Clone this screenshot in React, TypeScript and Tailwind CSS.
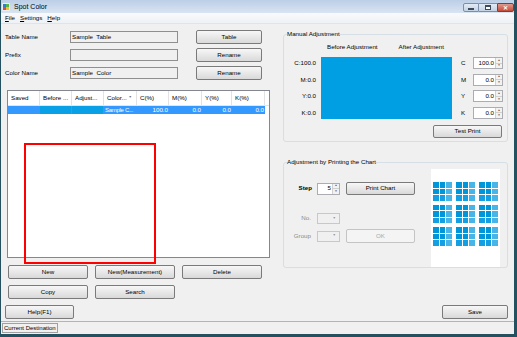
import React from 'react';
import clsx from 'clsx';

const FONT = "font-['Liberation_Sans',Arial,sans-serif]";

function Btn({ children, className, disabled }: { children: React.ReactNode; className?: string; disabled?: boolean }) {
  return (
    <div
      className={clsx(
        'flex items-center justify-center whitespace-nowrap rounded-[2px] border text-[6.2px] leading-none',
        disabled
          ? 'border-[#c4c4c4] bg-[#f4f4f4] text-[#a8a8a8]'
          : 'border-[#7a7a7a] bg-linear-to-b from-[#f7f7f7] to-[#d9d9d9] text-black',
        className
      )}
    >
      {children}
    </div>
  );
}

function Spin({ value, className }: { value: string; className?: string }) {
  return (
    <div className={clsx('flex h-[12px] border border-[#abadb3] bg-white', className)}>
      <div className="flex flex-1 items-center justify-end pr-[1px] text-[6.2px] leading-none">{value}</div>
      <div className="flex w-[7px] flex-col border-l border-[#d0d0d0] bg-[#f2f2f2]">
        <div className="flex flex-1 items-center justify-center border-b border-[#d0d0d0] text-[3px] leading-none text-[#606060]">▲</div>
        <div className="flex flex-1 items-center justify-center text-[3px] leading-none text-[#606060]">▼</div>
      </div>
    </div>
  );
}

function Combo() {
  return (
    <div className="flex h-[11px] w-[23px] items-center justify-end border border-[#c8c8c8] bg-[#f0f0f0] pr-[3px]">
      <span className="text-[3.5px] leading-none text-[#9a9a9a]">▼</span>
    </div>
  );
}

function TopRow({ label, value, button, first }: { label: string; value: string; button: string; first?: boolean }) {
  return (
    <div className={clsx('flex h-[14px] items-center', !first && 'mt-[4px]')}>
      <div className="w-[65px] text-[6.2px] leading-none">{label}</div>
      <div className="flex h-[12px] w-[108px] items-center whitespace-pre border border-[#8f8f8f] bg-[#f0f0f0] pl-[1px] text-[6.2px] leading-none">
        {value}
      </div>
      <Btn className="ml-[18px] h-[14px] w-[66px]">{button}</Btn>
    </div>
  );
}

const columns = [
  { name: 'Saved', w: 'w-[32px]' },
  { name: 'Before ...', w: 'w-[32px]' },
  { name: 'Adjust...', w: 'w-[32px]' },
  { name: 'Color...', w: 'w-[33px]' },
  { name: 'C(%)', w: 'w-[32px]' },
  { name: 'M(%)', w: 'w-[33px]' },
  { name: 'Y(%)', w: 'w-[30px]' },
  { name: 'K(%)', w: 'w-[33px]' },
];

function ChartGroup() {
  const cells = [0, 1, 2, 3, 4, 5, 6, 7, 8];
  return (
    <div className="grid h-[19px] w-[19px] grid-cols-3 grid-rows-3 gap-[1px]">
      {cells.map((i) => (
        <div
          key={i}
          className={clsx(i % 3 === 2 ? 'bg-[#47b5e8]' : i >= 6 ? 'bg-[#139fe2]' : 'bg-[#0096da]')}
        />
      ))}
    </div>
  );
}

export default function App() {
  return (
    <div
      className={clsx(
        FONT,
        'relative flex h-[337px] w-[517px] flex-col overflow-hidden border-r-[3px] border-b-[3px] border-l border-[#24505f] bg-[#f0f0f0] text-black'
      )}
    >
      {/* title bar */}
      <div className="flex h-[13px] items-center bg-linear-to-b from-[#bccfe6] to-[#d9e4f1] pl-[1px]">
        <svg width="8" height="8" viewBox="0 0 8 8">
          <rect x="0" y="0" width="8" height="8" rx="1" fill="#e8eef6" />
          <rect x="1" y="1" width="3" height="3" fill="#2f7fd0" />
          <rect x="4" y="1" width="3" height="3" fill="#58b448" />
          <rect x="1" y="4" width="3" height="3" fill="#e04a3a" />
          <rect x="4" y="4" width="3" height="3" fill="#f2c230" />
        </svg>
        <span className="ml-[4px] text-[7px] leading-none">Spot Color</span>
        <div className="ml-auto mt-[3px] flex h-[9px] self-start">
          <div className="flex w-[16px] items-center justify-center rounded-l-[2px] border border-[#7d8fa6] bg-linear-to-b from-[#e3ebf5] to-[#c3d2e4]">
            <div className="mt-[3px] h-[2px] w-[6px] border border-[#3b4a5c] bg-white" />
          </div>
          <div className="flex w-[18px] items-center justify-center border-y border-[#7d8fa6] bg-linear-to-b from-[#e3ebf5] to-[#c3d2e4]">
            <div className="h-[5px] w-[6px] border border-t-2 border-[#3b4a5c] bg-white" />
          </div>
          <div className="flex w-[17px] items-center justify-center rounded-r-[2px] border border-[#8a3a30] bg-linear-to-b from-[#e09a8c] to-[#c5493a] text-[6px] font-bold leading-none text-white">
            ✕
          </div>
        </div>
      </div>

      {/* menu bar */}
      <div className="flex h-[11px] items-center border-b border-[#e0e3e8] bg-linear-to-b from-[#f9fafc] to-[#eef1f5] pl-[4px] text-[6.2px] leading-none">
        <span><u>F</u>ile</span>
        <span className="ml-[5px]"><u>S</u>ettings</span>
        <span className="ml-[5px]"><u>H</u>elp</span>
      </div>

      {/* content */}
      <div className="flex flex-1">
        {/* left side */}
        <div className="flex w-[270px] shrink-0 flex-col pl-[4px] pt-[6px]">
          <TopRow first label="Table Name" value="Sample  Table" button="Table" />
          <TopRow label="Prefix" value="" button="Rename" />
          <TopRow label="Color Name" value="Sample  Color" button="Rename" />

          <div className="ml-[2px] mt-[10px] h-[168px] w-[263px] border border-[#828790] bg-white">
            <div className="flex h-[15px] border-b border-[#e5e5e5]">
              {columns.map((c) => (
                <div
                  key={c.name}
                  className={clsx(c.w, 'flex items-center whitespace-nowrap border-r border-[#e2e2e2] pl-[3px] text-[6.2px] leading-none')}
                >
                  {c.name}
                  {c.name === 'Color...' && <span className="ml-[2px] text-[3.5px] text-[#777]">▼</span>}
                </div>
              ))}
            </div>
            <div className="flex h-[8px] whitespace-nowrap text-[6.2px] leading-none text-white">
              <div className="w-[32px] bg-[#3399ff]" />
              <div className="w-[32px] border-r border-[#3399ff] bg-[#0aa0e6]" />
              <div className="w-[32px] border-r border-[#3399ff] bg-[#0aa0e6]" />
              <div className="flex w-[33px] items-center bg-[#3399ff] pl-[1px] text-[6px] tracking-[-0.3px]">Sample C...</div>
              <div className="flex w-[32px] items-center justify-end bg-[#3399ff] pr-[1px]">100.0</div>
              <div className="flex w-[33px] items-center justify-end bg-[#3399ff] pr-[1px]">0.0</div>
              <div className="flex w-[30px] items-center justify-end bg-[#3399ff] pr-[1px]">0.0</div>
              <div className="flex w-[33px] items-center justify-end bg-[#3399ff] pr-[1px]">0.0</div>
            </div>
          </div>

          <div className="ml-[3px] mt-[7px] flex gap-[7px]">
            <Btn className="h-[14px] w-[80px]">New</Btn>
            <Btn className="h-[14px] w-[80px]">New(Measurement)</Btn>
            <Btn className="h-[14px] w-[80px]">Delete</Btn>
          </div>
          <div className="ml-[3px] mt-[6px] flex gap-[7px]">
            <Btn className="h-[14px] w-[80px]">Copy</Btn>
            <Btn className="h-[14px] w-[80px]">Search</Btn>
          </div>
          <Btn className="mt-[6px] h-[14px] w-[69px]">Help(F1)</Btn>
        </div>

        {/* right side */}
        <div className="ml-[12px] flex w-[225px] shrink-0 flex-col pt-[6px]">
          <fieldset className="rounded-[3px] border border-[#d5dfe5] pb-[3px]">
            <legend className="ml-[3px] text-[6.2px] leading-[8px]">Manual Adjustment</legend>
            <div className="mt-[5px] flex h-[8px] items-center text-[6.2px] leading-none">
              <span className="ml-[43px]">Before Adjustment</span>
              <span className="ml-[21px]">After Adjustment</span>
            </div>
            <div className="mt-[6px] flex">
              <div className="flex h-[62px] w-[32px] flex-col justify-between text-right text-[6.2px] leading-[12px]">
                <div>C:100.0</div>
                <div>M:0.0</div>
                <div>Y:0.0</div>
                <div>K:0.0</div>
              </div>
              <div className="ml-[5px] h-[62px] w-[131px] bg-[#009fe3]" />
              <div className="ml-[9px] flex h-[62px] flex-col justify-between">
                {[
                  ['C', '100.0'],
                  ['M', '0.0'],
                  ['Y', '0.0'],
                  ['K', '0.0'],
                ].map(([l, v]) => (
                  <div key={l} className="flex h-[12px] items-center">
                    <div className="w-[12px] text-[6.2px] leading-none">{l}</div>
                    <Spin value={v} className="w-[30px]" />
                  </div>
                ))}
              </div>
            </div>
            <div className="mt-[6px] flex justify-end pr-[5px]">
              <Btn className="h-[13px] w-[69px]">Test Print</Btn>
            </div>
          </fieldset>

          <fieldset className="mt-[16px] rounded-[3px] border border-[#d5dfe5]">
            <legend className="ml-[3px] text-[6.2px] leading-[8px]">Adjustment by Printing the Chart</legend>
            <div className="flex">
              <div className="flex flex-col">
                <div className="mt-[16px] flex items-center">
                  <div className="w-[28px] text-right text-[6.2px] font-bold leading-none">Step</div>
                  <Spin value="5" className="ml-[5px] w-[23px]" />
                  <Btn className="ml-[6px] h-[13px] w-[69px]">Print Chart</Btn>
                </div>
                <div className="mt-[18px] flex items-center">
                  <div className="w-[27px] text-right text-[6.2px] leading-none text-[#8a8a8a]">No.</div>
                  <div className="ml-[6px]"><Combo /></div>
                </div>
                <div className="mt-[5px] flex items-center">
                  <div className="w-[27px] text-right text-[6.2px] leading-none text-[#8a8a8a]">Group</div>
                  <div className="ml-[6px]"><Combo /></div>
                  <Btn disabled className="ml-[6px] h-[14px] w-[69px]">OK</Btn>
                </div>
              </div>
              <div className="ml-auto mr-[7px] mt-[3px] h-[98px] w-[69px] bg-white pl-[2px] pt-[13px]">
                <div className="flex flex-col gap-[3.5px]">
                  {[0, 1, 2].map((r) => (
                    <div key={r} className="flex gap-[4px]">
                      <ChartGroup />
                      <ChartGroup />
                      <ChartGroup />
                    </div>
                  ))}
                </div>
              </div>
            </div>
          </fieldset>

          <Btn className="mt-[37px] h-[14px] w-[66px] self-end">Save</Btn>
        </div>
      </div>

      {/* status bar */}
      <div className="flex h-[13px] items-center border-t border-[#b4b4b4] bg-[#f0f0f0] pl-[1px]">
        <div className="flex h-[10px] items-center border border-[#a0a0a0] px-[1px] text-[6px] leading-none">
          Current Destination
        </div>
      </div>

      {/* red annotation box */}
      <div className="absolute left-[23px] top-[143px] h-[121px] w-[132px] border-2 border-[#ff0000]" />
    </div>
  );
}
